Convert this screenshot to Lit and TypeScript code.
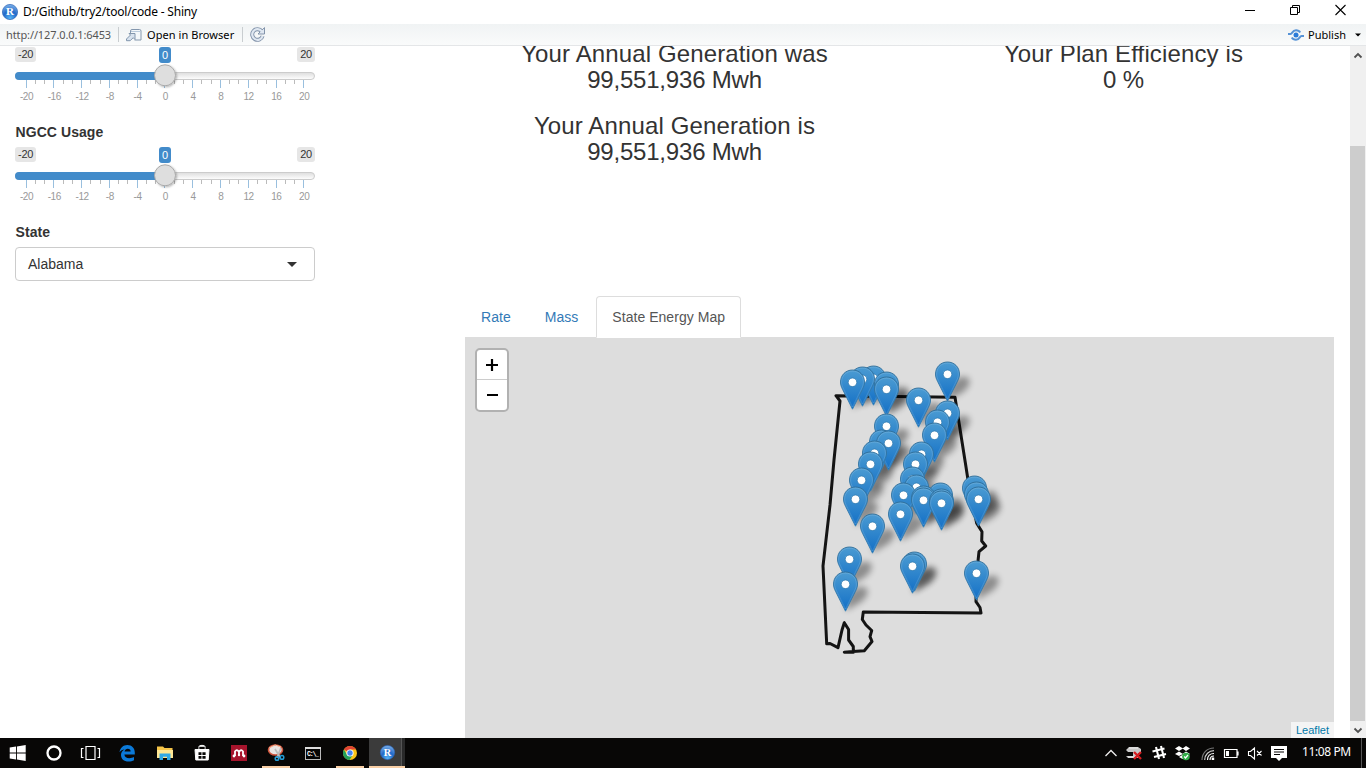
import { LitElement, html, svg, css } from "lit";
import { customElement, property } from "lit/decorators.js";

@customElement("range-slider")
class RangeSlider extends LitElement {
  @property({ type: Number }) min = -20;
  @property({ type: Number }) max = 20;
  @property({ type: Number }) value = 0;

  static styles = css`
    :host { display: block; width: 300px; height: 58px; color: #333; font-size: 10px; }
    .top { display: flex; justify-content: space-between; height: 16px; line-height: 15px; }
    .tag { background: #e6e6e6; border-radius: 3px; padding: 0 3px; height: 15px; font-size: 11px; letter-spacing: -0.25px; }
    .edge { flex: 1; display: flex; }
    .edge.right { justify-content: flex-end; }
    .tag.now { background: #428bca; color: #fff; height: 16px; line-height: 16px; }
    svg { display: block; overflow: visible; }
    .labels { display: flex; margin: 1px -3px 0 -2.4px; color: #999; line-height: 12px; }
    .labels span { flex: 1; text-align: center; font-size: 10px; letter-spacing: -0.5px; }
  `;

  render() {
    const ticks = Array.from({ length: 31 }, (_, i) => i);
    const labels = Array.from({ length: 11 }, (_, i) => this.min + (i * (this.max - this.min)) / 10);
    return html`
      <div class="top">
        <div class="edge"><span class="tag">${this.min}</span></div>
        <span class="tag now">${this.value}</span>
        <div class="edge right"><span class="tag">${this.max}</span></div>
      </div>
      <svg width="300" height="27" viewBox="0 0 300 27">
        <defs>
          <linearGradient id="rail" x1="0" y1="0" x2="0" y2="1">
            <stop offset="0" stop-color="#ddd" /><stop offset="1" stop-color="#fff" />
          </linearGradient>
          <filter id="sh" x="-30%" y="-30%" width="170%" height="170%">
            <feDropShadow dx="1" dy="1" stdDeviation="1.2" flood-color="#000" flood-opacity=".3" />
          </filter>
        </defs>
        ${ticks.map((i) => {
          const x = Math.floor(11 + (i * 277.8) / 30) + 0.5;
          const big = i % 3 === 0;
          return svg`<path d="M${x} 17V${big ? 25 : 21}" stroke=${big ? "#99bfde" : "#bbb"} />`;
        })}
        <rect x="0.5" y="9.5" width="299" height="7" rx="3.5" fill="url(#rail)" stroke="#ccc" />
        <path d="M150 9H4a4 4 0 0 0 0 8H150Z" fill="#428bca" />
        <circle cx="150" cy="12.3" r="10.5" fill="#dedede" stroke="#aaa" filter="url(#sh)" />
      </svg>
      <div class="labels">${labels.map((l) => html`<span>${l}</span>`)}</div>
    `;
  }
}

const PINS: [number, number][] = [
  [873, 378], [862, 379], [947, 374], [852, 382], [886, 384], [886, 389], [918, 400], [947, 413],
  [937, 422], [886, 426], [934, 435], [881, 442], [888, 443], [874, 453], [921, 454], [870, 464],
  [915, 464], [912, 479], [861, 480], [916, 487], [974, 488], [976, 494], [903, 495], [940, 495],
  [923, 498], [855, 499], [978, 499], [923, 500], [941, 501], [941, 503], [900, 514], [872, 526],
  [849, 559], [914, 564], [912, 566], [976, 573], [845, 584],
];

@customElement("energy-map")
class EnergyMap extends LitElement {
  static styles = css`
    :host { display: block; position: relative; height: 401px; background: #ddd; overflow: hidden; }
    .canvas { display: block; }
    .zoom { position: absolute; left: 10px; top: 11px; width: 30px; border: 2px solid #b1b1b1; border-radius: 5px; background: #fff; overflow: hidden; }
    .btn { box-sizing: border-box; height: 29px; display: flex; align-items: center; justify-content: center; }
    .btn + .btn { border-top: 1px solid #ccc; height: 31px; }
    .attr { position: absolute; right: 0; bottom: 0; background: #f4f4f4; color: #0078a8; padding: 0 5px; font-size: 11px; line-height: 16px; }
  `;

  render() {
    return html`
      <svg class="canvas" width="869" height="401" viewBox="465 337 869 401">
        <defs>
          <linearGradient id="pin" x1="0" y1="0" x2="0" y2="1">
            <stop offset="0" stop-color="#4b9bd2" /><stop offset="1" stop-color="#126fc6" />
          </linearGradient>
          <linearGradient id="rim" x1="0" y1="0" x2="0" y2="1">
            <stop offset="0" stop-color="#2e6c97" /><stop offset="1" stop-color="#3883b7" />
          </linearGradient>
          <filter id="soft" x="-60%" y="-60%" width="220%" height="220%"><feGaussianBlur stdDeviation="3.2" /></filter>
          <g id="shadow"><path d="M0.5 27L3 12C7 4 17 1 21 4C25 8 21 14 16 18Z" fill="#000" opacity=".36" filter="url(#soft)" /></g>
          <g id="marker">
            <path d="M0.5 -12C7.3 -12 12.5 -6.8 12.5 0C12.5 3 11.7 4.8 10.5 7.3L0.5 27.2L-9.5 7.3C-10.7 4.8 -11.5 3 -11.5 0C-11.5 -6.8 -6.3 -12 0.5 -12Z" fill="url(#pin)" stroke="url(#rim)" stroke-width=".9" />
            <path d="M0.5 -10.9C6.7 -10.9 11.4 -6.2 11.4 0C11.4 2.7 10.6 4.4 9.5 6.8L0.5 25L-8.5 6.8C-9.6 4.4 -10.4 2.7 -10.4 0C-10.4 -6.2 -5.7 -10.9 0.5 -10.9Z" fill="none" stroke="#fff" stroke-opacity=".13" />
            <circle cx="0.5" cy="0.3" r="4.3" fill="#fff" stroke="#2f79ae" stroke-width=".8" />
          </g>
        </defs>
        <path
          d="M836 395.7L955 397.3L966 467L968 480L976.7 523.3L982 531.7L981.7 541L985.7 546L979 551.7L978 561L976 575V601.7L980 607.5L981 613L863.3 611.9L862.3 619.5L866 625L871.7 630.5L870 636.7L872 641.5L864.3 650.7L853 651.5L844.3 652.2H853.3V646.5L848.6 640V629.5L844.3 622.7L842 630L838 647.7L830 643.5L826.7 643.8L823 566L830 505L834 460L840 401Z"
          fill="none" stroke="#141414" stroke-width="3" stroke-linejoin="round" stroke-linecap="round" />
        ${PINS.map(([x, y]) => svg`<use href="#shadow" x=${x} y=${y} />`)}
        ${PINS.map(([x, y]) => svg`<use href="#marker" x=${x} y=${y} />`)}
      </svg>
      <div class="zoom">
        <div class="btn"><svg width="15" height="14"><path d="M1 7H13M7 1V13" stroke="#000" stroke-width="2.2" /></svg></div>
        <div class="btn"><svg width="12" height="14"><path d="M1 7H12" stroke="#000" stroke-width="2" /></svg></div>
      </div>
      <div class="attr">Leaflet</div>
    `;
  }
}

const rLogo = (size: number) => html`
  <svg width=${size} height=${size} viewBox="0 0 16 16">
    <defs>
      <radialGradient id="orb" cx=".5" cy=".9" r=".9">
        <stop offset="0" stop-color="#55b4f5" /><stop offset=".5" stop-color="#2269c9" /><stop offset="1" stop-color="#7db2ea" />
      </radialGradient>
    </defs>
    <circle cx="8" cy="8" r="7.6" fill="url(#orb)" stroke="#2a62b5" stroke-width=".7" />
    <text x="8" y="11.4" text-anchor="middle" font-family="Liberation Serif, serif" font-weight="bold" font-size="11" fill="#fff">R</text>
  </svg>`;

const TASKS: { kind?: string; icon: unknown }[] = [
  { icon: svg`<path d="M1.7 3.4L8 2.5V8.4H1.7ZM8.9 2.4L17.7 1V8.4H8.9ZM1.7 9.4H8V15.4L1.7 14.5ZM8.9 9.4H17.7V17L8.9 15.6Z" fill="#fff"/>` },
  { icon: svg`<circle cx="9" cy="9" r="6.5" fill="none" stroke="#fff" stroke-width="2.3"/>` },
  { icon: svg`<path d="M4 2.5H13V15.5H4ZM1.5 4.5H-.5V13.5H1.5M15.5 4.5H17.5V13.5H15.5" fill="none" stroke="#fff" stroke-width="1.2"/>` },
  { icon: svg`<path d="M.5 8.3C1.2 3.8 4.3 1 8.3 1C13 1 15.8 4.2 15.8 8.5V10.5H5.4C5.6 13 7.6 14.2 10.2 14.2C12 14.2 13.7 13.7 15 13V16.3C13.5 17.1 11.6 17.5 9.6 17.5C4.7 17.5 2 14.8 2 11C2 8.7 3.3 6.7 5.5 5.6C3.4 5.8 1.6 6.8 .5 8.3ZM5.5 7.6H11.6C11.6 5.8 10.6 4.8 8.8 4.8C7.1 4.8 5.9 5.9 5.5 7.6Z" fill="#0b79d8"/>` },
  { icon: svg`<path d="M1 2.5H7L8.5 4H16.5V14H1Z" fill="#f6c549"/><path d="M1 6H17V14H1Z" fill="#ffe794"/><path d="M3.5 9.5H14.5V16H11V12.8H7V16H3.5Z" fill="#32a9e6"/>` },
  { icon: svg`<path d="M2 5.5H16L15.2 16H2.8ZM6 5.5V2.5C6 1 12 1 12 2.5V5.5" fill="#fff" stroke="#fff"/><path d="M6.3 5V2.8H11.7V5Z" fill="#080706"/><path d="M5.5 8.3H8.5V11H5.5ZM9.4 8.3H12.6V11H9.4ZM5.5 12H8.5V14.8H5.5ZM9.4 12H12.6V14.8H9.4Z" fill="#080706"/>` },
  { icon: svg`<rect x="1" y="1" width="16" height="16" fill="#a6142c"/><path d="M5 12V7M9 11V7.5M13 12V7M5 7.5Q7 4.5 9 8Q11 4.5 13 7.5" fill="none" stroke="#fff" stroke-width="1.8"/><circle cx="4" cy="12" r="1.4" fill="#fff"/><circle cx="14" cy="12" r="1.4" fill="#fff"/><circle cx="9" cy="11" r="1.2" fill="#fff"/>` },
  { kind: "running", icon: svg`<ellipse cx="8.5" cy="6" rx="7" ry="5" fill="#e9e4e1" stroke="#d2553c" stroke-width="1.6"/><path d="M2 4L8 1L14 3" fill="none" stroke="#f3bb9d"/><path d="M8 5L13.5 14M13.8 4L10 14" stroke="#bbb" stroke-width="1.7"/><g fill="none" stroke="#249bd4" stroke-width="1.5"><circle cx="10" cy="14.5" r="1.8"/><circle cx="15" cy="13.4" r="1.8"/></g>` },
  { icon: svg`<rect x="1.5" y="3.5" width="15" height="12" fill="#050505" stroke="#bbb"/><path d="M1 4H17" stroke="#ddd" stroke-width="2"/><text x="3" y="12.3" font-family="Liberation Mono, monospace" font-weight="bold" font-size="6.5" fill="#fff" textLength="12">C:\\_</text>` },
  { kind: "running", icon: svg`<circle cx="9" cy="9" r="7" fill="#fbc417"/><path d="M9 9L2.9 5.5A7 7 0 0 1 15.1 5.5H9Z" fill="#e14434"/><path d="M2.9 5.5A7 7 0 0 0 8.5 16L12 10.7L9 12L6 10.7Z" fill="#22a05a"/><circle cx="9" cy="9" r="3.6" fill="#fff"/><circle cx="9" cy="9" r="2.7" fill="#4685ee"/>` },
];

@customElement("app-root")
class AppRoot extends LitElement {
  static styles = css`
    :host { display: flex; flex-direction: column; width: 1366px; height: 768px; overflow: hidden; background: #fff; font-family: "Liberation Sans", Arial, sans-serif; color: #333; font-size: 14px; }
    svg { display: block; flex: none; overflow: visible; }
    .ui { font-family: "Noto Sans", "Open Sans", sans-serif; color: #000; }
    .title { flex: none; height: 24px; display: flex; align-items: center; padding: 0 20px 0 2px; font-size: 12px; box-sizing: border-box; }
    .title .name { margin-left: 5px; letter-spacing: -0.2px; flex: 1; line-height: 24px; height: 24px; }
    .win { display: flex; gap: 35px; margin-top: -4px; }
    .tools { flex: none; height: 21px; display: flex; align-items: center; background: linear-gradient(#f0f3f4, #fafbfb); border-bottom: 1px solid #e4e6e8; font-size: 11px; padding-left: 6px; }
    .url { color: #555; letter-spacing: -0.11px; }
    .sep { width: 1px; height: 15px; background: #c9cdd0; }
    .sep.first { margin: 0 7px; }
    .browse { margin: 0 8px 0 5px; letter-spacing: 0.06px; }
    .reload { margin-left: 7px; }
    .grow { flex: 1; }
    .pub { margin: 0 9px 0 4px; }
    .drop { margin-right: 5px; }
    .body { flex: 1; min-height: 0; display: flex; overflow: hidden; }
    .side { width: 300px; padding: 1px 0 0 15px; flex: none; display: flex; flex-direction: column; }
    .lab { font-weight: bold; line-height: 20px; height: 20px; letter-spacing: 0.07px; margin: 17px 0 5px 0.5px; }
    .select { box-sizing: border-box; height: 34px; border: 1px solid #ccc; border-radius: 4px; display: flex; align-items: center; justify-content: space-between; padding: 0 17px 0 12px; }
    .main { flex: 1; min-width: 0; padding: 0 16px 0 150px; display: flex; flex-direction: column; }
    .stats { display: grid; grid-template-columns: 449px 449px; height: 250px; margin-left: -15px; }
    .stat h3 { font-weight: 500; font-size: 24px; line-height: 26px; margin: 0 0 20px; text-align: center; white-space: nowrap; letter-spacing: 0.13px; }
    .stat .num { letter-spacing: -0.2px; }
    .stat { margin-top: -5px; }
    .tabs { display: flex; gap: 2px; height: 42px; margin-bottom: -1px; position: relative; z-index: 1; }
    .tab { box-sizing: border-box; padding: 0 15px; border: 1px solid transparent; line-height: 41px; color: #337ab7; height: 42px; letter-spacing: 0.04px; }
    .tab.on { color: #555; background: #fff; border-color: #ddd; border-bottom-color: #fff; border-radius: 4px 4px 0 0; }
    .scroll { width: 16px; flex: none; background: #f0f0f0; display: flex; flex-direction: column; align-items: center; box-sizing: border-box; padding: 7px 0 5px; }
    .thumb { width: 15px; height: 575px; background: #cdcdcd; align-self: flex-start; margin: 88px 0 auto; }
    .task { flex: none; height: 30px; background: #080706; display: flex; }
    .item { width: 28px; margin-right: 9px; height: 30px; display: flex; align-items: center; justify-content: center; box-sizing: border-box; border-bottom: 2px solid transparent; padding-top: 1px; flex: none; }
    .item.running { border-bottom-color: #f9cfa5; }
    .items { display: flex; padding-left: 3px; flex: 1; }
    .item.cur { background: #3b3b3b; width: 33px; margin: 0 0 0 -4px; padding-left: 3px; box-shadow: inset -1px 0 #555; }
    .item.back { width: 3px; background: #292929; margin: 0; padding: 0; }
    .tray { display: flex; align-items: center; height: 30px; gap: 7.5px; }
    .clock { color: #fff; font-size: 12px; letter-spacing: -0.4px; margin-left: 15px; width: 59px; line-height: 28px; height: 30px; white-space: nowrap; }
    .peek { width: 1px; background: #555; margin-right: 4px; }
  `;

  render() {
    return html`
      <div class="title ui">
        ${rLogo(16)}
        <span class="name">D:/Github/try2/tool/code - Shiny</span>
        <div class="win">
          <svg width="10" height="10"><path d="M0 5.5H10" stroke="#000" /></svg>
          <svg width="10" height="10"><path d="M.5 2.5H7.5V9.5H.5ZM2.5 2.5V.5H9.5V7.5H7.5" fill="none" stroke="#000" /></svg>
          <svg width="11" height="10"><path d="M.5 0L10.5 10M10.5 0L.5 10" stroke="#000" stroke-width="1.1" /></svg>
        </div>
      </div>
      <div class="tools ui">
        <span class="url">http://127.0.0.1:6453</span>
        <span class="sep first"></span>
        <svg width="16" height="14" viewBox="0 0 16 14"><path d="M4.5 5V3Q4.5 1.5 6 1.5H13.5Q15 1.5 15 3V12H8.5" fill="#f3f7fa" stroke="#8497ae" /><path d="M5 3.5H14.5" stroke="#b9cadc" /><path d="M.5 11L4.5 7L3 5.5H9V11.5L7.2 9.7L4.2 12.7H.5Z" fill="#d7e2ee" stroke="#8296ad" /></svg>
        <span class="browse">Open in Browser</span>
        <span class="sep"></span>
        <svg class="reload" width="15" height="15" viewBox="0 0 15 15"><path d="M11.8 4.4A5.3 5.3 0 1 0 12.6 9" fill="none" stroke="#8293aa" stroke-width="4" /><path d="M14.5 .6V7H8Z" fill="#dfe7f1" stroke="#8293aa" /><path d="M11.8 4.4A5.3 5.3 0 1 0 12.6 9" fill="none" stroke="#dfe7f1" stroke-width="2.2" /></svg>
        <span class="grow"></span>
        <svg width="16" height="12" viewBox="0 0 16 12"><circle cx="8" cy="6" r="2.5" fill="#2a7bd9" /><path d="M0 5H2.5C4.5 5 4 1.3 8 1.3C10 1.3 11.5 2.2 12.2 3.5M16 7H13.5C11.5 7 12 10.7 8 10.7C6 10.7 4.5 9.8 3.8 8.5" fill="none" stroke="#5592d6" stroke-width="1.9" /></svg>
        <span class="pub">Publish</span>
        <svg class="drop" width="6" height="4"><path d="M0 .5H6L3 3.5Z" fill="#000" /></svg>
      </div>
      <div class="body">
        <div class="side">
          <range-slider></range-slider>
          <div class="lab">NGCC Usage</div>
          <range-slider></range-slider>
          <div class="lab">State</div>
          <div class="select"><span>Alabama</span><svg width="10" height="5"><path d="M0 0H10L5 5Z" fill="#333" /></svg></div>
        </div>
        <div class="main">
          <div class="stats">
            <div class="stat">
              <h3>Your Annual Generation was<br /><span class="num">99,551,936 Mwh</span></h3>
              <h3>Your Annual Generation is<br /><span class="num">99,551,936 Mwh</span></h3>
            </div>
            <div class="stat"><h3>Your Plan Efficiency is<br /><span class="num">0 %</span></h3></div>
          </div>
          <div class="tabs">
            <span class="tab">Rate</span><span class="tab">Mass</span><span class="tab on">State Energy Map</span>
          </div>
          <energy-map></energy-map>
        </div>
        <div class="scroll">
          <svg width="8" height="5"><path d="M.5 4.5L4 1L7.5 4.5" fill="none" stroke="#505050" stroke-width="1.8" /></svg>
          <div class="thumb"></div>
          <svg width="8" height="5"><path d="M.5 .5L4 4L7.5 .5" fill="none" stroke="#505050" stroke-width="1.8" /></svg>
        </div>
      </div>
      <div class="task ui">
        <div class="items">
          ${TASKS.map((t) => html`<div class="item ${t.kind ?? ""}"><svg width="18" height="18" viewBox="0 0 18 18">${t.icon}</svg></div>`)}
          <div class="item running cur">${rLogo(15)}</div>
          <div class="item running back"></div>
        </div>
        <div class="tray">
          <svg width="14" height="16"><path d="M1.5 11L7 5.5L12.5 11" fill="none" stroke="#eee" stroke-width="1.3" /></svg>
          <svg width="18" height="16" viewBox="0 0 18 16"><path d="M4 2H13L16 4V8H13V13H3L1 11H8V7H3L1 5Z" fill="#c8c8c8" /><path d="M4 3H13M3 12H11" stroke="#eee" /><path d="M9 7L16 14M16 7L9 14" stroke="#d51c20" stroke-width="2.4" /></svg>
          <svg width="16" height="16" viewBox="0 0 16 16"><path d="M5 2L8 14M10 1L13 13M1.5 6.5L13.5 3.5M3 12L15 9" stroke="#fff" stroke-width="2.1" /></svg>
          <svg width="18" height="16" viewBox="0 0 18 16"><path d="M5 1L9 3.5L5 6L1 3.5ZM12 1L16 3.5L12 6L8.5 3.5ZM5 6.5L9 9L5 11L1 9ZM12 6.5L16 9L12 11L8.5 9ZM5 12L8.7 9.7L12 12L8.5 14Z" fill="#fff" /><circle cx="12" cy="11.5" r="3.8" fill="#31ad48" /><path d="M10.2 11.5L11.5 13L14 10" fill="none" stroke="#fff" stroke-width="1.2" /></svg>
          <svg width="16" height="16" viewBox="0 0 16 16"><g fill="none" stroke-width="1.2"><path d="M2 15C2 8 7 3 14 3" stroke="#777" /><path d="M4.7 15C4.7 9.5 9 5.7 14 5.7" stroke="#ccc" /><path d="M7.5 15C7.5 11 10 8.5 14 8.5M10 15C10 12.5 11.5 11 14 11" stroke="#fff" /></g><rect x="11.7" y="12.5" width="2.5" height="2.5" fill="#fff" /></svg>
          <svg width="16" height="16" viewBox="0 0 16 16"><path d="M1.5 4.5H14V12.5H1.5ZM15 6.5V10.5" fill="none" stroke="#fff" stroke-width="1.2" /><rect x="3" y="6" width="3" height="5" fill="#fff" /></svg>
          <svg width="17" height="16" viewBox="0 0 17 16"><path d="M1.5 6.5H3.5L7.5 3V14L3.5 10.5H1.5ZM10 6L14.5 10.5M14.5 6L10 10.5" fill="none" stroke="#fff" stroke-width="1.1" /></svg>
          <svg width="16" height="16" viewBox="0 0 16 16"><path d="M0 1H16V13H11L8 16L5 13H0Z" fill="#fff" /><path d="M3 4.5H13M3 7H13M3 9.5H9" stroke="#080706" stroke-width="1.1" /></svg>
        </div>
        <div class="clock">11:08 PM</div>
        <div class="peek"></div>
      </div>
    `;
  }
}
